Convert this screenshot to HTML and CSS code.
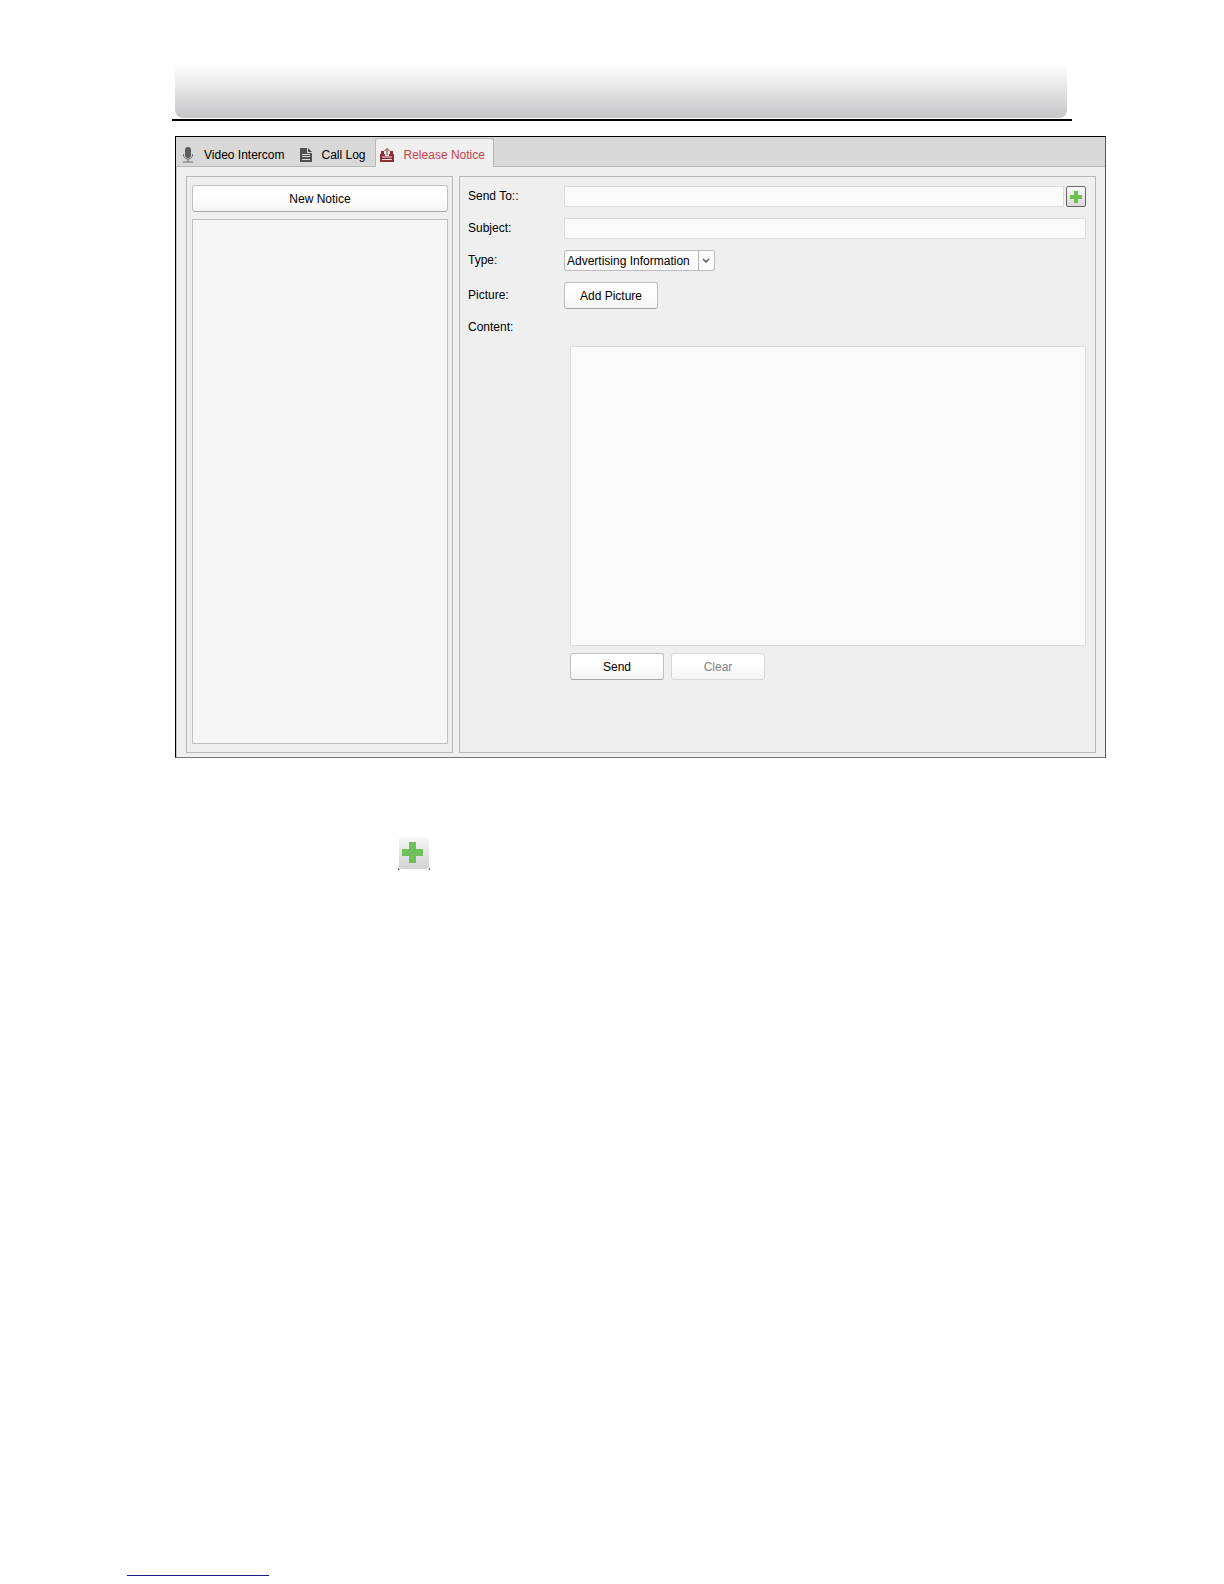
FILE: index.html
```html
<!DOCTYPE html>
<html lang="en">
<head>
    <meta charset="UTF-8">
    <meta name="viewport" content="width=device-width, initial-scale=1.0">
    <title>Release Notice</title>
    <link rel="stylesheet" href="styles.css">
</head>
<body>
    <header class="page-header">
        <div class="banner"></div>
    </header>

    <main class="window">
        <nav class="tabs">
            <button type="button" class="tab">
                <svg width="12" height="16" viewBox="0 0 12 16" aria-hidden="true">
                    <rect x="3" y="0" width="6" height="11" rx="3" fill="#5c5c5c"/>
                    <path d="M1.500 7v1a4.500 4 0 0 0 9 0V7M6 12v3M1 15h10" fill="none" stroke="#6a6a6a"/>
                </svg>
                Video Intercom
            </button>
            <button type="button" class="tab">
                <svg width="12" height="16" viewBox="0 0 12 16" aria-hidden="true">
                    <path d="M0 1h7v5h5v9H0z" fill="#505050"/>
                    <path d="M8 1l4 4H8z" fill="#505050"/>
                    <path d="M2 7.500h8M2 9.500h8M2 12.500h8" stroke="#d8d8d8"/>
                </svg>
                Call Log
            </button>
            <button type="button" class="tab active">
                <svg width="14" height="16" viewBox="0 0 14 16" aria-hidden="true">
                    <path d="M0 7h1V4h3v3h1v2h4V7h1V4h3v3h1v8H0z" fill="#8c3038"/>
                    <path d="M7 8V2M4.500 4L7 1.500 9.500 4" fill="none" stroke="#8c3038"/>
                    <path d="M2 10h10M2 12.500h10" stroke="#efe4e4"/>
                </svg>
                Release Notice
            </button>
        </nav>

        <div class="panels">
            <section class="panel notices">
                <button type="button" class="btn">New Notice</button>
                <div class="notice-list"></div>
            </section>

            <form class="panel notice-form">
                <div class="row">
                    <label for="sendTo">Send To::</label>
                    <input type="text" id="sendTo">
                    <button type="button" class="add-btn" aria-label="Add">
                        <svg width="12" height="12" viewBox="0 0 12 12" aria-hidden="true">
                            <path d="M4 0h4v4h4v4H8v4H4V8H0V4h4z" fill="#6cc04f"/>
                        </svg>
                    </button>
                </div>
                <div class="row">
                    <label for="subject">Subject:</label>
                    <input type="text" id="subject">
                </div>
                <div class="row">
                    <label for="type">Type:</label>
                    <div class="select-box">
                        <select id="type">
                            <option>Advertising Information</option>
                        </select>
                        <svg class="arrow" width="16" height="19" viewBox="0 0 16 19" aria-hidden="true">
                            <path d="M.5 0v19" stroke="#b4b4b4"/>
                            <path d="M5 8l3 3 3-3" fill="none" stroke="#555" stroke-width="1.500"/>
                        </svg>
                    </div>
                </div>
                <div class="row">
                    <label for="picture">Picture:</label>
                    <button type="button" id="picture" class="btn">Add Picture</button>
                </div>
                <div class="row">
                    <label for="content">Content:</label>
                </div>
                <div class="content">
                    <textarea id="content"></textarea>
                    <div class="actions">
                        <button type="button" class="btn">Send</button>
                        <button type="button" class="btn" disabled>Clear</button>
                    </div>
                </div>
            </form>
        </div>
    </main>

    <div class="add-icon">
        <svg width="32" height="34" viewBox="0 0 32 34" aria-hidden="true">
            <defs>
                <linearGradient id="plate" x1="0" y1="0" x2="0" y2="1">
                    <stop offset="0" stop-color="#f7f7f7"/>
                    <stop offset="1" stop-color="#d2d2d2"/>
                </linearGradient>
            </defs>
            <path d="M0 31v3h2zM32 31v3h-2z" fill="#777"/>
            <rect x="1" y="1" width="30" height="32" rx="3" fill="url(#plate)"/>
            <path d="M11 6h7v7h7v7h-7v7h-7v-7H4v-7h7z" fill="#6fc05a"/>
        </svg>
    </div>

    <footer class="page-footer">
        <a href="#" class="footer-link" aria-label="Link"></a>
    </footer>
</body>
</html>
```

FILE: styles.css
```css
* {
    box-sizing: border-box;
}
body {
    display: flex;
    flex-direction: column;
    min-height: 100vh;
    margin: 0;
    background: #fff;
    color: #000;
    font-family: "Liberation Sans", Arial, sans-serif;
    font-size: 12px;
}
button, input, select, textarea {
    font: inherit;
    color: inherit;
}
svg {
    display: block;
    flex: none;
}
.page-header {
    margin: 60px 152px 15px 172px;
    padding: 0 5px 1px 3px;
    border-bottom: 2px solid #000;
}
.banner {
    height: 58px;
    border-radius: 0 0 8px 8px;
    background: linear-gradient(#fff 4%, #f6f6f6 20%, #e2e2e3 55%, #cbcbcd 90%, #c6c6c8);
}
.window {
    margin: 0 118px 0 175px;
    border: 1px solid #000;
    border-right-color: #555;
    border-bottom-color: #777;
    background: #efefef;
}
.tabs {
    display: flex;
    height: 30px;
    padding-top: 1px;
    background: #d8d8d8;
    border-bottom: 1px solid #b8b8b8;
}
.tab {
    display: flex;
    align-items: center;
    gap: 10px;
    padding: 6px 9px 0 6px;
    border: none;
    background: none;
    white-space: nowrap;
}
.tab.active {
    height: 29px;
    padding: 3px 8px 0 4px;
    border: 1px solid #b8b8b8;
    border-bottom: none;
    border-radius: 3px 3px 0 0;
    background: #efefef;
    color: #c8414b;
}
.panels {
    display: flex;
    gap: 6px;
    padding: 9px 9px 4px;
    border-left: 1px solid #c4c4c4;
}
.panel {
    border: 1px solid #b8b8b8;
}
.notices {
    display: flex;
    flex-direction: column;
    gap: 7px;
    flex: 0 0 30%;
    max-width: 267px;
    padding: 8px 4px 8px 5px;
}
.notice-list {
    flex: 1;
    border: 1px solid #c0c0c0;
    background: #f5f5f5;
}
.notice-form {
    display: flex;
    flex-direction: column;
    flex: 1;
    gap: 11px;
    min-width: 0;
    padding: 9px 9px 72px 8px;
}
.row {
    display: flex;
    align-items: center;
}
.row label {
    flex: 0 0 96px;
    line-height: 15px;
}
input, textarea {
    border: 1px solid #dcdcdc;
    border-radius: 0;
    background: #fafafa;
}
input {
    flex: 1;
    min-width: 0;
    height: 21px;
    padding: 0 3px;
}
.btn {
    height: 27px;
    min-width: 94px;
    padding: 0 12px;
    border: 1px solid #c0c0c0;
    border-bottom-color: #a8a8a8;
    border-radius: 3px;
    background: linear-gradient(#fff 40%, #f3f3f3);
}
.btn:disabled {
    border-color: #d8d8d8;
    color: #808488;
}
.add-btn {
    display: flex;
    align-items: center;
    justify-content: center;
    width: 20px;
    height: 21px;
    margin-left: 2px;
    padding: 0;
    border: 1px solid #666;
    border-radius: 2px;
    background: linear-gradient(#fafafa, #d8d8d8);
}
.select-box {
    position: relative;
    width: 151px;
}
select {
    display: block;
    width: 100%;
    height: 21px;
    padding: 0 18px 0 2px;
    appearance: none;
    border: 1px solid #bcbcbc;
    border-radius: 2px;
    background: #fcfcfc;
}
.arrow {
    position: absolute;
    top: 1px;
    right: 1px;
    pointer-events: none;
}
.content {
    margin-left: 102px;
}
textarea {
    display: block;
    width: 100%;
    height: 300px;
    resize: none;
}
.actions {
    display: flex;
    gap: 7px;
    margin-top: 7px;
}
.add-icon {
    margin: 78px 0 0 398px;
}
.page-footer {
    margin-top: auto;
    padding: 0 127px 8px;
}
.footer-link {
    display: block;
    width: 142px;
    height: 14px;
    border-bottom: 1px solid #1a1a8c;
}
```
